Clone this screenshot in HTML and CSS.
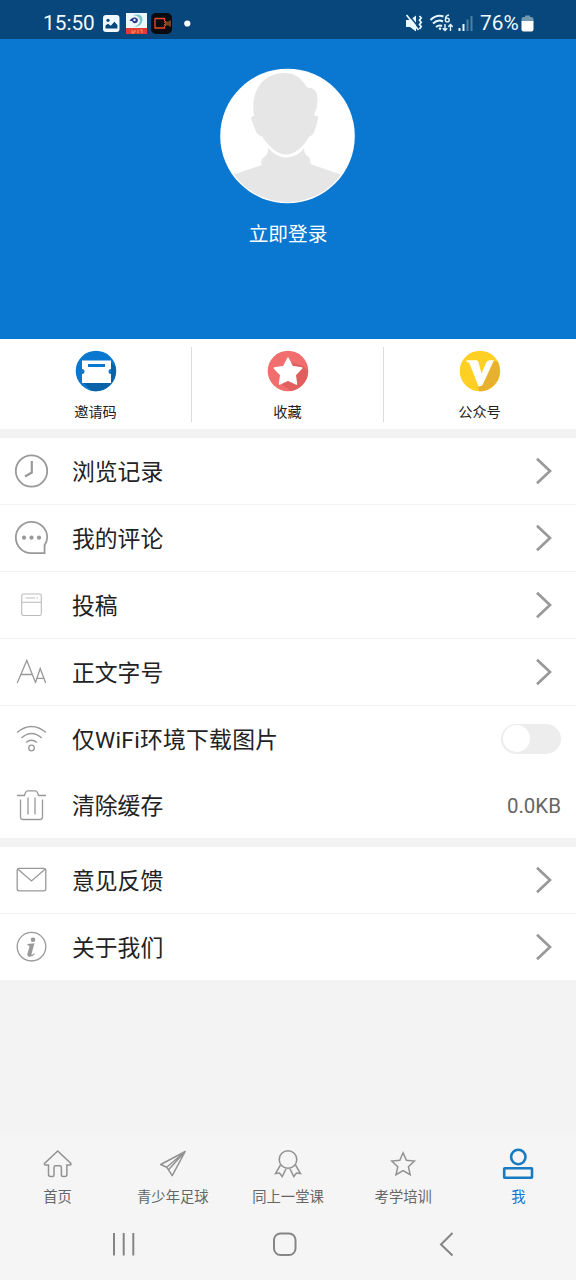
FILE: index.html
```html
<!DOCTYPE html>
<html lang="zh-CN">
<head>
<meta charset="utf-8">
<title>我</title>
<link rel="stylesheet" href="styles.css">
</head>
<body>
<div class="screen">
  <header class="status">
    <span class="clock">15:50</span>
    <svg class="status-apps" width="92" height="24" viewBox="101 11 92 24">
      <rect x="103" y="15" width="16.5" height="17" rx="3" fill="#f2faff"/>
      <circle cx="108" cy="20.3" r="1.6" fill="#07477b"/>
      <path d="M105.5 28.5v-3l2.5-1.8 2.8 2 3.6-4 3 3.2v3.6z" fill="#07477b"/>
      <rect x="126" y="13" width="21" height="15.500" fill="#eef7fa"/>
      <path d="M133 15q10-2 9.500 5.500-.8 6-9 6.500 6-2 6.500-6 0-5-7-6z" fill="#7cc5cf"/>
      <path d="M129.500 21q2-4 6-3.500 4 1.500 1.500 5-3.500 2-5-1.500z" fill="#29368a"/>
      <circle cx="134.500" cy="20" r="1.200" fill="#dff3fa"/>
      <rect x="126" y="28" width="21" height="6" fill="#e43b36"/>
      <path d="M132 30v3h2v-2h2m2-1v3m2-3h2v3" fill="none" stroke="#f5b35b" stroke-width=".8"/>
      <rect x="151" y="13" width="21" height="21" rx="5" fill="#080b10"/>
      <path d="M155 19v9h9.500v-2m0-5v-2.500h-10" fill="none" stroke="#e84b2c" stroke-width="1.300"/>
      <path d="M164 22.500l2-1v4l-2-1M168 21.500v4M170 20.500v6" fill="none" stroke="#ef7a2b" stroke-width="1"/>
      <circle cx="187.300" cy="23.500" r="3.100" fill="#fff"/>
    </svg>
    <svg class="status-net" width="72" height="24" viewBox="404 11 72 24">
      <path d="M406 20h4l6-4.500v16l-6-4.500h-4z" fill="#e9f7ff"/>
      <path d="M408 14l12 15" stroke="#07477b" stroke-width="1.500"/>
      <path d="M406.500 15l12 15M419.500 16l1.700 2-1.700 2 1.700 2.500-1.700 2 1.700 2-1.700 2.500" fill="none" stroke="#e9f7ff" stroke-width="1.700"/>
      <path d="M430.500 20q6-6 13-3.500M433 23.500q5-4.500 10-2M436 27q3-2.500 6-1" fill="none" stroke="#e9f7ff" stroke-width="2"/>
      <path d="M438.500 28.500l1.500-1.500 1.500 1.500-1.500 2z" fill="#e9f7ff"/>
      <path d="M449 15q-3.500.5-3.500 4.300" fill="none" stroke="#e9f7ff" stroke-width="1.500"/>
      <circle cx="447.300" cy="20" r="1.900" fill="none" stroke="#e9f7ff" stroke-width="1.400"/>
      <path d="M445 24v6.500m-2.200-2.300 2.200 2.300 2.200-2.300M450.500 31v-6.500m-2.200 2.300 2.200-2.300 2.200 2.300" fill="none" stroke="#e9f7ff" stroke-width="1.400"/>
      <path d="M459.500 28v3M463.500 24v7" stroke="#e9f7ff" stroke-width="2"/>
      <path d="M467.500 19.500v11.500M471.500 16v15" stroke="#50809f" stroke-width="2"/>
    </svg>
    <span class="percent">76%</span>
    <svg class="battery" width="13" height="18" viewBox="521 14 13 18">
      <path d="M525 17v-1.500h5v1.500h1.500q2 0 2 2v2.500h-12v-2.500q0-2 2-2z" fill="#7297b1"/>
      <path d="M521.500 21h12v8.500q0 2-2 2h-8q-2 0-2-2z" fill="#fff"/>
    </svg>
  </header>

  <section class="profile">
    <svg class="avatar" width="136" height="136" viewBox="220 68 136 136">
      <defs><clipPath id="face"><circle cx="287.500" cy="136" r="66"/></clipPath></defs>
      <circle cx="287.500" cy="136" r="67.300" fill="#fff"/>
      <g clip-path="url(#face)" fill="#e6e6e6">
        <path d="M254 116C250 92 262 73.500 284 73C294 72.500 302 78 307 87.500Q317 87 317.500 98Q318 107 314 115.500Q319 115 318 119L315 130Q313 136 309.500 136C304 146 296 154 287 154.500Q280 155 273 149Q265 142 262 136Q257 136 255 129L251.500 120Q250 116 254 116Z"/>
        <path d="M268 148Q277 158 288 157.500Q299 156 304 148Q304 155 309 157Q311 162 310.500 164L342 175V205H232V175L262 165Q260 161 263 158Q269 154 268 148Z"/>
      </g>
    </svg>
    <span class="login">立即登录</span>
  </section>

  <section class="quick">
    <div class="quick-item">
      <svg width="42" height="42" viewBox="0 0 42 42">
        <circle cx="21" cy="21" r="20.300" fill="#0a78d0"/>
        <path d="M7 31h29V13l4 3a20.300 20.300 0 0 1-24 24.700z" fill="#0862a7"/>
        <path d="M7 10.500h29v8.500a2.500 2.500 0 0 0 0 5v9h-29v-9a2.500 2.500 0 0 0 0-5z" fill="#fff"/>
        <path d="M13 15.500h17" stroke="#0a78d0" stroke-width="3"/>
      </svg>
      <span>邀请码</span>
    </div>
    <div class="quick-item">
      <svg width="42" height="42" viewBox="0 0 42 42">
        <circle cx="21" cy="21" r="20.300" fill="#f26e6e"/>
        <path d="M24 12l12 4 5 5a20.300 20.300 0 0 1-17 20l-11-8z" fill="#e15e5f"/>
        <path d="M21 8l4.200 8.400 9.600 1.600-6.600 7 1.300 9-8.500-4-8.500 4 1.300-9-6.600-7 9.600-1.600z" fill="#fff" stroke="#fff" stroke-width="1.500" stroke-linejoin="round"/>
      </svg>
      <span>收藏</span>
    </div>
    <div class="quick-item">
      <svg width="42" height="42" viewBox="0 0 42 42">
        <circle cx="21" cy="21" r="20.300" fill="#fdd023"/>
        <path d="M34.500 11l4 .5a20.300 20.300 0 0 1-18.500 29.800l-1-5z" fill="#e8b12d"/>
        <path d="M7.500 10.300h9.500q2 0 2.500 2l3 11.200 4.500-10.500q1-2.700 3.500-2.700h4.500L24 34q-1 2.500-4.500 2.500L10.500 13.500q-1-1.800-3-1.800z" fill="#fff"/>
      </svg>
      <span>公众号</span>
    </div>
  </section>

  <main class="menu">
    <div class="row">
      <svg class="icon" width="36" height="36" viewBox="14 453 36 36"><circle cx="31.500" cy="471" r="15.700" stroke-width="1.800"/><path d="M31.800 461v11.500l-6.800 4" stroke-width="2.200"/></svg>
      <span>浏览记录</span>
      <svg class="chevron" width="18" height="28" viewBox="0 0 18 28"><path d="M2 1.700l13 12.300-13 12.300"/></svg>
    </div>
    <div class="row">
      <svg class="icon" width="36" height="36" viewBox="14 520 36 36"><path d="M44.500 553.200H31.500A15.700 15.700 0 1 1 47.200 537.500Q47 542 44.600 545z" stroke-width="1.800"/><g class="dots"><circle cx="24" cy="537.700" r="2.100"/><circle cx="31.500" cy="537.700" r="2.100"/><circle cx="39" cy="537.700" r="2.100"/></g></svg>
      <span>我的评论</span>
      <svg class="chevron" width="18" height="28" viewBox="0 0 18 28"><path d="M2 1.700l13 12.300-13 12.300"/></svg>
    </div>
    <div class="row">
      <svg class="icon pale" width="36" height="36" viewBox="14 587 36 36"><rect x="21.700" y="594" width="19.600" height="21.500" rx="1.800"/><path d="M22 602.300h19M25.500 598h9.500m1.500 0h1.500"/></svg>
      <span>投稿</span>
      <svg class="chevron" width="18" height="28" viewBox="0 0 18 28"><path d="M2 1.700l13 12.300-13 12.300"/></svg>
    </div>
    <div class="row">
      <svg class="icon" width="36" height="36" viewBox="14 654 36 36"><path d="M17.200 683l9.600-22.500 8.900 22.500M20.500 674.500h12.200M35.500 682.500l4.700-14 5.500 14.500M37 678.300h6.800"/></svg>
      <span>正文字号</span>
      <svg class="chevron" width="18" height="28" viewBox="0 0 18 28"><path d="M2 1.700l13 12.300-13 12.300"/></svg>
    </div>
    <div class="row short plain">
      <svg class="icon" width="36" height="36" viewBox="14 721 36 36"><path d="M17 732.500Q31.500 720.500 46 732.500M21.300 738Q31.500 729 41.800 738M26 742.500Q31.500 738 37 742.500"/><circle cx="31.500" cy="748" r="2.800"/></svg>
      <span class="wide">仅WiFi环境下载图片</span>
      <i class="switch"></i>
    </div>
    <div class="row short plain">
      <svg class="icon" width="36" height="36" viewBox="14 787 36 36"><path d="M17 795.500h7.500q1-4.500 3-4.700h8q2 .2 3 4.700h7.500M20.500 799.500v17.500q0 2.500 2.500 2.500h17q2.500 0 2.500-2.500v-17.500M28 797.500v17M35 797.500v17"/></svg>
      <span>清除缓存</span>
      <b class="size">0.0KB</b>
    </div>
  </main>

  <section class="menu">
    <div class="row">
      <svg class="icon" width="36" height="36" viewBox="14 862 36 36"><rect x="17.200" y="868.300" width="28.600" height="22.500" rx="2"/><path d="M18 869.200l13.500 11.800L45 869.200"/></svg>
      <span>意见反馈</span>
      <svg class="chevron" width="18" height="28" viewBox="0 0 18 28"><path d="M2 1.700l13 12.300-13 12.300"/></svg>
    </div>
    <div class="row short plain">
      <svg class="icon" width="36" height="36" viewBox="14 928.500 36 36"><circle cx="31.500" cy="946.200" r="14.300"/><circle class="solid" cx="33" cy="939.200" r="2.300"/><path class="solid" d="M27.500 943.500l7-.8-3 10.800q-.3 1.300 1 .6l1.900-1.300.6.600q-3.200 3.200-5.800 2.800-2.500-.6-1.700-3.200l2-6.700q.3-1.400-2-1.500z"/></svg>
      <span>关于我们</span>
      <svg class="chevron" width="18" height="28" viewBox="0 0 18 28"><path d="M2 1.700l13 12.300-13 12.300"/></svg>
    </div>
  </section>

  <footer class="bottom">
    <nav class="tabs">
      <div class="tab">
        <svg width="36" height="36" viewBox="40 1146 36 36"><path d="M57.700 1151L44.500 1163.500q-.5 1.500 1 1.500h3v9.500q0 2 2 2h2q1.500 0 1.500-1.500v-7.500q0-1.700 1.700-1.700h4q1.700 0 1.700 1.700v7.500q0 1.500 1.500 1.500h2q2 0 2-2v-9.500h3q1.500 0 1-1.500z"/></svg>
        <span>首页</span>
      </div>
      <div class="tab">
        <svg width="36" height="36" viewBox="154.800 1146 36 36"><path d="M185 1151.500L160.500 1164.500l6 2.700 5.500 8.500zM185 1151.500l-18.500 15.700M185 1151.500l-16.700 18.300" stroke-linejoin="round"/></svg>
        <span>青少年足球</span>
      </div>
      <div class="tab">
        <svg width="36" height="36" viewBox="270 1146 36 36"><circle cx="288" cy="1159.500" r="8.800"/><path d="M280.500 1165l-5 8.500 4-.5 2.700 3.500 4-8M295.500 1165l5 8.500-4-.5-2.700 3.500-4-8"/></svg>
        <span>同上一堂课</span>
      </div>
      <div class="tab">
        <svg width="36" height="36" viewBox="385.200 1146 36 36"><path d="M403.300 1152.800l3.300 7.500 8 .8-6 5.600 1.800 8-7.100-4.200-7.100 4.200 1.800-8-6-5.600 8-.8z"/></svg>
        <span>考学培训</span>
      </div>
      <div class="tab active">
        <svg width="36" height="36" viewBox="500.300 1146 36 36"><circle cx="518.600" cy="1157" r="7.200"/><rect x="504.500" y="1168.300" width="27.800" height="9.400" rx=".5"/></svg>
        <span>我</span>
      </div>
    </nav>
    <div class="system">
      <svg width="24" height="26" viewBox="112 1231 24 26"><path d="M114 1233v22.500M123.700 1233v22.500M133.300 1233v22.500"/></svg>
      <svg width="26" height="26" viewBox="274 1231 26 26"><rect x="276" y="1233.500" width="21.500" height="21.500" rx="6.500"/></svg>
      <svg width="18" height="26" viewBox="438 1231 18 26"><path d="M452.500 1233l-11.500 11.500 11.500 11"/></svg>
    </div>
  </footer>
</div>
</body>
</html>
```
FILE: styles.css
```css
* { box-sizing: border-box; }
body {
  margin: 0;
  font-family: Roboto, "Noto Sans CJK SC", sans-serif;
  background: #f3f3f3;
}
svg { display: block; flex: none; }
.screen {
  width: 576px;
  height: 1280px;
  display: flex;
  flex-direction: column;
  overflow: hidden;
}
.status {
  height: 39px;
  padding: 7px 42px 0 43px;
  display: flex;
  align-items: center;
  background: #07477b;
  color: #f2faff;
  font-size: 20.8px;
}
.clock { width: 58px; }
.status-net { margin-left: auto; }
.percent { margin-left: 4px; width: 41px; }
.profile {
  height: 300px;
  padding-top: 29px;
  display: flex;
  flex-direction: column;
  align-items: center;
  background: #0a78d0;
}
.login {
  margin-top: 16px;
  color: #fff;
  font-size: 19.7px;
  line-height: 30px;
}
.quick {
  height: 90px;
  padding: 8px 0 7px;
  display: grid;
  grid-template-columns: 192px 192px 192px;
  background: #fff;
}
.quick-item {
  padding: 3px 1px 0 0;
  display: flex;
  flex-direction: column;
  align-items: center;
  font-size: 14.2px;
  line-height: 20px;
  color: #222;
}
.quick-item:not(:last-child) {
  padding-right: 0;
  border-right: 1px solid #dcdcdc;
}
.quick-item span { margin-top: 10px; }
.menu { margin-top: 9px; background: #fff; }
.row {
  height: 67px;
  padding: 0 15px 0 14px;
  display: flex;
  align-items: center;
  border-bottom: 1px solid #f3f3f3;
  font-size: 22.8px;
  color: #222;
}
.row.short { height: 66px; }
.row.plain { border-bottom: 0; }
.row span { margin-left: 22px; padding-bottom: 2px; }
.row .wide { letter-spacing: .25px; }
.icon { fill: none; stroke: #999; stroke-width: 1.3; }
.icon.pale { stroke: #bbb; stroke-width: 1.1; }
.icon .dots, .icon .solid { fill: #999; stroke: none; }
.chevron {
  margin: 0 8px 0 auto;
  fill: none;
  stroke: #999;
  stroke-width: 2.7;
}
.switch {
  margin-left: auto;
  margin-bottom: 1px;
  width: 60px;
  height: 30px;
  padding: 1.5px;
  border-radius: 15px;
  background: #ededed;
}
.switch::before {
  content: "";
  display: block;
  width: 27px;
  height: 27px;
  border-radius: 50%;
  background: #fff;
}
.size {
  margin-left: auto;
  padding-top: 2px;
  font-size: 20.5px;
  font-weight: 400;
  color: #666;
}
.bottom {
  margin-top: auto;
  height: 145px;
  background: #f5f5f5;
}
.tabs {
  height: 74px;
  padding-top: 11px;
  display: grid;
  grid-template-columns: repeat(5, 1fr);
}
.tab {
  display: flex;
  flex-direction: column;
  align-items: center;
  font-size: 14.3px;
  line-height: 20px;
  color: #666;
}
.tab svg { fill: none; stroke: #929292; stroke-width: 1.5; }
.tab span { margin-top: 5px; white-space: nowrap; }
.tab.active { color: #0a78d0; }
.tab.active svg { stroke: #187bc2; stroke-width: 2.6; }
.system {
  padding: 22px 120px 0 112px;
  display: grid;
  grid-template-columns: 160px 166px 18px;
}
.system svg { fill: none; stroke: #858585; stroke-width: 2; }
```
